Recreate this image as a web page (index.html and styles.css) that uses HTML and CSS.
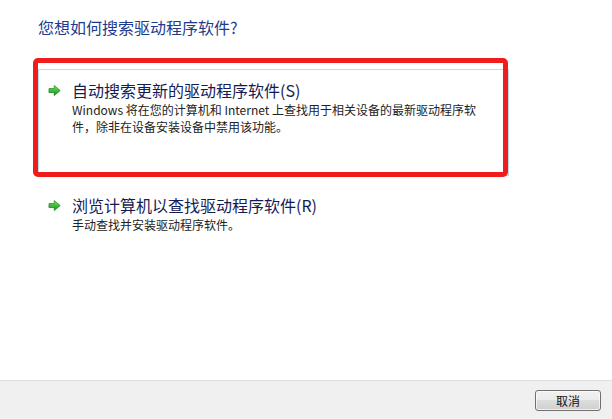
FILE: index.html
```html
<!DOCTYPE html>
<html lang="zh-CN">
<head>
<meta charset="utf-8">
<title>更新驱动程序软件</title>
<link rel="stylesheet" href="styles.css">
</head>
<body>
<div class="window">
  <main class="content">
    <h1 class="instruction">您想如何搜索驱动程序软件?</h1>

    <div class="command-link hovered">
      <svg class="arrow" width="14" height="12" viewBox="0 0 14 12" aria-hidden="true">
        <defs>
          <linearGradient id="g1" x1="0" y1="0" x2="0" y2="1">
            <stop offset="0" stop-color="#86e35f"/>
            <stop offset="0.55" stop-color="#3cb73a"/>
            <stop offset="1" stop-color="#138a1c"/>
          </linearGradient>
        </defs>
        <path d="M0.5 4.6 H6 V1.4 L12 6.4 L6 11.4 V8.2 H0.5 Z" fill="#bdbdbd" opacity="0.55"/>
        <path d="M1 3.5 H6.2 V0.5 L12.2 5.5 L6.2 10.5 V7.5 H1 Z" fill="url(#g1)" stroke="#1b8a22" stroke-width="0.7" stroke-linejoin="round"/>
      </svg>
      <div class="link-text">
        <div class="link-title">自动搜索更新的驱动程序软件(S)</div>
        <div class="link-desc">Windows 将在您的计算机和 Internet 上查找用于相关设备的最新驱动程序软件，除非在设备安装设备中禁用该功能。</div>
      </div>
      <div class="annotation"></div>
    </div>

    <div class="command-link">
      <svg class="arrow" width="14" height="12" viewBox="0 0 14 12" aria-hidden="true">
        <defs>
          <linearGradient id="g2" x1="0" y1="0" x2="0" y2="1">
            <stop offset="0" stop-color="#86e35f"/>
            <stop offset="0.55" stop-color="#3cb73a"/>
            <stop offset="1" stop-color="#138a1c"/>
          </linearGradient>
        </defs>
        <path d="M0.5 4.6 H6 V1.4 L12 6.4 L6 11.4 V8.2 H0.5 Z" fill="#bdbdbd" opacity="0.55"/>
        <path d="M1 3.5 H6.2 V0.5 L12.2 5.5 L6.2 10.5 V7.5 H1 Z" fill="url(#g2)" stroke="#1b8a22" stroke-width="0.7" stroke-linejoin="round"/>
      </svg>
      <div class="link-text">
        <div class="link-title">浏览计算机以查找驱动程序软件(R)</div>
        <div class="link-desc">手动查找并安装驱动程序软件。</div>
      </div>
    </div>
  </main>

  <footer class="footer">
    <button class="btn" type="button">取消</button>
  </footer>
</div>
</body>
</html>
```

FILE: styles.css
```css
* {
  box-sizing: border-box;
}

html, body {
  margin: 0;
  padding: 0;
  background: #ffffff;
}

body {
  font-family: "Noto Sans CJK SC", "Noto Sans", sans-serif;
  color: #1e1e1e;
}

.window {
  width: 612px;
  height: 419px;
  display: flex;
  flex-direction: column;
  overflow: hidden;
}

.content {
  flex: 1;
  padding: 17px 0 0 38px;
}

.instruction {
  margin: 0;
  font-size: 16px;
  font-weight: normal;
  line-height: 20px;
  color: #1e3a8c;
}

.command-link {
  position: relative;
  width: 471px;
  display: flex;
  align-items: flex-start;
  gap: 10px;
  padding: 9px 0 0 9px;
  border: 1px solid transparent;
  margin-top: 9px;
  height: 50px;
}

.command-link.hovered {
  margin-top: 32px;
  height: 107px;
  padding-top: 10px;
  border-color: #b2def0;
}

.arrow {
  flex: none;
  margin-top: 5px;
}

.link-text {
  flex: 1;
  padding-right: 18px;
}

.link-title {
  font-size: 16px;
  line-height: 20px;
  color: #151c55;
}

.link-desc {
  margin-top: 1px;
  font-size: 12px;
  line-height: 17px;
  color: #222222;
}

.annotation {
  position: absolute;
  left: -6px;
  top: -12px;
  right: 0;
  bottom: -2px;
  border: 5px solid #f01c1c;
  border-radius: 5px;
  pointer-events: none;
}

.footer {
  flex: none;
  height: 39px;
  background: #f0f0f0;
  border-top: 1px solid #dfdfdf;
  display: flex;
  justify-content: flex-end;
  align-items: flex-start;
  padding: 9px 11px 0 0;
}

.btn {
  width: 66px;
  height: 21px;
  padding: 0;
  font-family: "Noto Sans CJK SC", "Noto Sans", sans-serif;
  font-size: 12px;
  line-height: 19px;
  color: #111111;
  border: 1px solid #707070;
  border-radius: 3px;
  background: linear-gradient(to bottom, #f2f2f2 0%, #ebebeb 49%, #dddddd 50%, #cfcfcf 100%);
  box-shadow: inset 0 0 0 1px rgba(255, 255, 255, 0.7);
}
```
